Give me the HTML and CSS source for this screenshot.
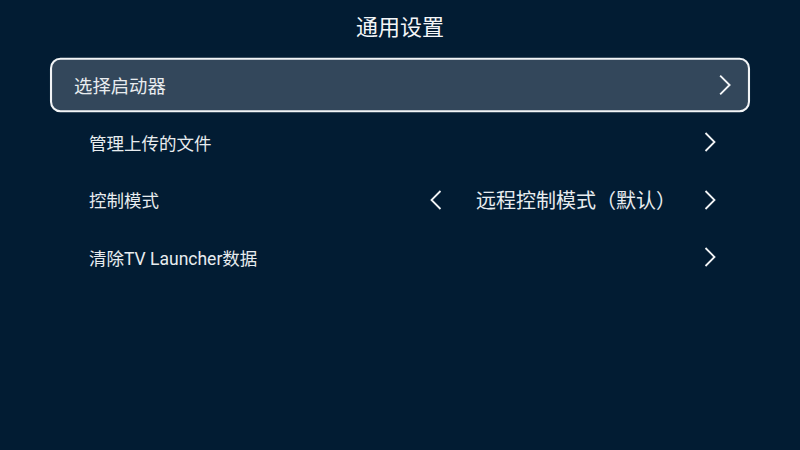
FILE: index.html
```html
<!DOCTYPE html>
<html lang="zh-CN">
<head>
  <meta charset="UTF-8">
  <meta name="viewport" content="width=device-width, initial-scale=1">
  <title>通用设置</title>
  <link rel="stylesheet" href="styles.css">
</head>
<body>

<header>通用设置</header>

<ul class="settings">
  <li class="item focused">
    <span class="label">选择启动器</span>
    <svg class="arrow" viewBox="0 0 12 20"><polyline points="1.5,1 10.5,10 1.5,19"/></svg>
  </li>
  <li class="item">
    <span class="label">管理上传的文件</span>
    <svg class="arrow" viewBox="0 0 12 20"><polyline points="1.5,1 10.5,10 1.5,19"/></svg>
  </li>
  <li class="item">
    <span class="label">控制模式</span>
    <div class="switcher">
      <svg class="arrow" viewBox="0 0 12 20"><polyline points="10.5,1 1.5,10 10.5,19"/></svg>
      <span class="value">远程控制模式（默认）</span>
      <svg class="arrow" viewBox="0 0 12 20"><polyline points="1.5,1 10.5,10 1.5,19"/></svg>
    </div>
  </li>
  <li class="item">
    <span class="label">清除TV Launcher数据</span>
    <svg class="arrow" viewBox="0 0 12 20"><polyline points="1.5,1 10.5,10 1.5,19"/></svg>
  </li>
</ul>

</body>
</html>
```

FILE: styles.css
```css
* { margin: 0; padding: 0; box-sizing: border-box; }
body {
  font-family: Roboto, "Noto Sans CJK SC", sans-serif;
  background: #021c33;
  color: #e8ecef;
  width: 800px;
  height: 450px;
  overflow: hidden;
}
header {
  height: 56px;
  line-height: 56px;
  text-align: center;
  font-size: 22px;
  color: #f4f6f8;
}
.settings {
  list-style: none;
  margin: 0 66px;
  padding-top: 2.5px;
  display: flex;
  flex-direction: column;
  gap: 5.5px;
}
.item {
  height: 52px;
  display: flex;
  align-items: center;
  justify-content: space-between;
  padding: 0 16px 0 21px;
  font-size: 17.5px;
  border: 2px solid transparent;
  border-radius: 10px;
}
/* focused row grows a little, like on the TV */
.item.focused {
  background: #33475b;
  border-color: #f2f4f6;
  transform: scale(1.048);
}
.arrow {
  width: 12px;
  height: 20px;
  fill: none;
  stroke: #f2f4f6;
  stroke-width: 1.8;
}
.switcher {
  display: flex;
  align-items: center;
  gap: 32px;
}
.switcher .arrow:first-child {
  margin-right: 2px;
}
.value {
  font-size: 20px;
  margin-right: -4px;
}
```
